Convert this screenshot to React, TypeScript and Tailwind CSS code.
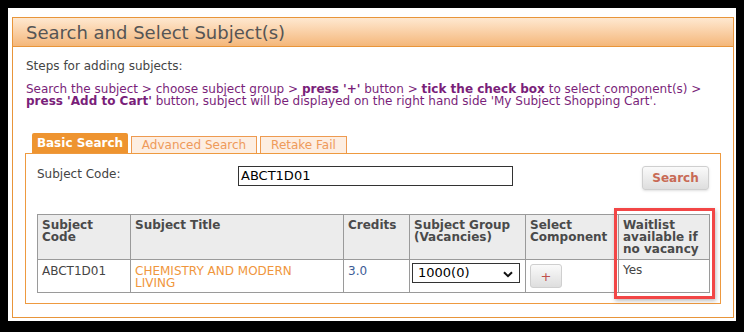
import React from 'react';

const font = { fontFamily: '"DejaVu Sans", Verdana, sans-serif' };

const Chevron = () => (
  <svg width="10" height="7" viewBox="0 0 10 7" className="absolute right-[6px] top-[7px] pointer-events-none">
    <path d="M1 1.2 L5 5.2 L9 1.2" fill="none" stroke="#111" strokeWidth="2" />
  </svg>
);

const App: React.FC = () => {
  return (
    <div className="w-[744px] h-[332px] bg-black p-2" style={font}>
      <div className="bg-white w-[728px] h-[313px] pt-[9px] pl-1 pr-[2px]">
        {/* panel */}
        <div className="border border-[#e8953a] h-[301px]">
          <div className="h-[29px] border-b border-[#e8953a] bg-gradient-to-b from-[#fee8d0] to-[#f4b77a] pl-[13px] flex items-center">
            <h2 className="text-[18px] text-[#555] leading-none pt-[1px]">Search and Select Subject(s)</h2>
          </div>

          <div className="px-3 pt-[12px]">
            <p className="pl-[1px] text-[12px] leading-[14px] text-[#444]">Steps for adding subjects:</p>
            <p className="pl-[1px] mt-[10px] text-[12px] leading-[12px] text-[#7a1f7a] whitespace-nowrap">
              Search the subject &gt; choose subject group &gt; <b>press '+'</b> button &gt; <b>tick the check box</b> to select component(s) &gt;
              <br />
              <b>press 'Add to Cart'</b> button, subject will be displayed on the right hand side 'My Subject Shopping Cart'.
            </p>

            {/* tabs */}
            <div className="mt-[26px] pl-[7px] flex items-end gap-[3px] h-[20px]">
              <div className="h-[20px] w-[96px] bg-[#ee9430] rounded-t-[2px] text-white font-bold text-[12px] flex items-center justify-center">
                Basic Search
              </div>
              <div className="h-[17px] w-[126px] bg-[#fdeee2] border border-b-0 border-[#ee9a50] text-[#ee9a5a] text-[12px] flex items-center justify-center">
                Advanced Search
              </div>
              <div className="h-[17px] w-[87px] bg-[#fdeee2] border border-b-0 border-[#ee9a50] text-[#ee9a5a] text-[12px] flex items-center justify-center">
                Retake Fail
              </div>
            </div>

            {/* tab body */}
            <div className="border border-[#ee9a40] w-[696px] h-[151px] px-[11px] pt-[12px]">
              <div className="flex items-start h-[36px]">
                <span className="w-[201px] text-[12px] text-[#444] leading-[14px] pt-[1px]">Subject Code:</span>
                <div className="w-[275px] h-[20px] border border-[#333] px-[2px] text-[13px] text-black leading-[18px]">
                  ABCT1D01
                </div>
                <div className="flex-1 flex justify-end">
                  <button className="w-[67px] h-[24px] rounded-[3px] border border-[#cfcfcf] bg-gradient-to-b from-[#fafafa] to-[#dedede] text-[12px] font-bold text-[#c86a55] shadow-sm">
                    Search
                  </button>
                </div>
              </div>

              <div className="relative mt-[12px]">
                <table className="table-fixed border-collapse w-[672px] text-[12px]">
                  <colgroup>
                    <col className="w-[93px]" />
                    <col className="w-[213px]" />
                    <col className="w-[66px]" />
                    <col className="w-[116px]" />
                    <col className="w-[93px]" />
                    <col className="w-[91px]" />
                  </colgroup>
                  <thead>
                    <tr className="h-[45px] bg-[#ececec] text-[#4a4a4a] font-bold leading-[12px]">
                      <th className="border border-[#9a9a9a] align-top text-left px-[4px] pt-[4px]">Subject<br />Code</th>
                      <th className="border border-[#9a9a9a] align-top text-left px-[4px] pt-[4px]">Subject Title</th>
                      <th className="border border-[#9a9a9a] align-top text-left px-[4px] pt-[4px]">Credits</th>
                      <th className="border border-[#9a9a9a] align-top text-left px-[4px] pt-[4px]">Subject Group<br />(Vacancies)</th>
                      <th className="border border-[#9a9a9a] align-top text-left px-[4px] pt-[4px]">Select<br />Component</th>
                      <th className="border border-[#9a9a9a] align-top text-left px-[4px] pt-[4px]">Waitlist<br />available if<br />no vacancy</th>
                    </tr>
                  </thead>
                  <tbody>
                    <tr className="h-[33px] leading-[12px]">
                      <td className="border border-[#9a9a9a] align-top px-[4px] pt-[5px] text-[#444]">ABCT1D01</td>
                      <td className="border border-[#9a9a9a] align-top px-[4px] pt-[5px] text-[#f0963c]">CHEMISTRY AND MODERN<br />LIVING</td>
                      <td className="border border-[#9a9a9a] align-top px-[4px] pt-[5px] text-[#3d5c96]">3.0</td>
                      <td className="border border-[#9a9a9a] align-top px-[2px] pt-[3px]">
                        <div className="relative w-[108px] h-[20px] border border-[#333] bg-white text-[13px] text-black leading-[18px] pl-[5px]">
                          1000(0)
                          <Chevron />
                        </div>
                      </td>
                      <td className="border border-[#9a9a9a] align-top px-[4px] pt-[4px]">
                        <button className="w-[32px] h-[24px] rounded-[3px] border border-[#cfcfcf] bg-gradient-to-b from-[#fafafa] to-[#dedede] text-[13px] text-[#c0504d] leading-none">
                          +
                        </button>
                      </td>
                      <td className="border border-[#9a9a9a] align-top px-[4px] pt-[4px] text-[#444]">Yes</td>
                    </tr>
                  </tbody>
                </table>
                <div className="absolute left-[577px] top-[-6px] w-[101px] h-[91px] border-[3px] border-[#f24646] shadow-[1px_2px_4px_rgba(0,0,0,0.25)] pointer-events-none" />
              </div>
            </div>
          </div>
        </div>
      </div>
    </div>
  );
};

export default App;
